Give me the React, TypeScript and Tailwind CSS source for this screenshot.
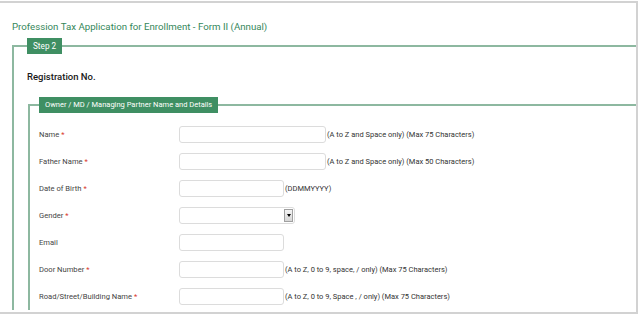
const rows = [
  { label: 'Name', req: true, width: 'w-[147px]', hint: '(A to Z and Space only) (Max 75 Characters)' },
  { label: 'Father Name', req: true, width: 'w-[147px]', hint: '(A to Z and Space only) (Max 50 Characters)' },
  { label: 'Date of Birth', req: true, width: 'w-[105px]', hint: '(DDMMYYYY)' },
  { label: 'Gender', req: true, width: 'w-[116px]', select: true },
  { label: 'Email', req: false, width: 'w-[105px]' },
  { label: 'Door Number', req: true, width: 'w-[105px]', hint: '(A to Z, 0 to 9, space, / only) (Max 75 Characters)' },
  { label: 'Road/Street/Building Name', req: true, width: 'w-[105px]', hint: '(A to Z, 0 to 9, Space , / only) (Max 75 Characters)' },
];

export default function App() {
  return (
    <div className="w-[640px] h-[315px] bg-white overflow-hidden font-['Roboto','Liberation_Sans',sans-serif]">
      <div className="mt-[1px] h-[313px] w-[638px] border-t-2 border-r-2 border-b-2 border-[#d2d2d2] overflow-hidden">
        <h1 className="pl-3 pt-[17px] text-[9.7px] leading-[14px] text-[#35875a]">
          Profession Tax Application for Enrollment - Form II (Annual)
        </h1>

        <fieldset className="mt-[4px] ml-[12px] border-t-2 border-l-2 border-[#8db8a0] pl-[13px]">
          <legend className="bg-[#3f8f63] px-[6px] text-[8.2px] leading-[16px] text-white">Step 2</legend>

          <div className="mt-[15px] text-[9.5px] leading-[16px] font-medium text-[#1a1a1a]">Registration No.</div>

          <fieldset className="mt-[12px] ml-[1px] border-t-2 border-l-2 border-[#8db8a0] pl-[9px]">
            <legend className="bg-[#3f8f63] px-[6px] text-[7.5px] leading-[16px] text-white">
              Owner / MD / Managing Partner Name and Details
            </legend>

            <div className="pt-[8px]">
              {rows.map((r) => (
                <div key={r.label} className="flex h-[27px] items-center">
                  <div className="w-[140px] text-[7.6px] text-[#444]">
                    {r.label}
                    {r.req && <span className="ml-[2px] text-[#d9342b]">*</span>}
                  </div>
                  {r.select ? (
                    <div className={`${r.width} relative h-[17px] rounded-[3px] border border-[#dcdcdc] bg-white`}>
                      <div className="absolute right-[1px] top-[1px] flex h-[13px] w-[9px] items-center justify-center border border-[#a0a0a0] bg-gradient-to-b from-[#f4f4f4] to-[#d6d6d6]">
                        <span className="block h-0 w-0 border-x-[2px] border-t-[3px] border-x-transparent border-t-black" />
                      </div>
                    </div>
                  ) : (
                    <div className={`${r.width} h-[17px] rounded-[3px] border border-[#dcdcdc] bg-white`} />
                  )}
                  {r.hint && <span className="ml-[1px] text-[7.5px] text-[#333] whitespace-nowrap">{r.hint}</span>}
                </div>
              ))}
            </div>
          </fieldset>
        </fieldset>
      </div>
    </div>
  );
}
